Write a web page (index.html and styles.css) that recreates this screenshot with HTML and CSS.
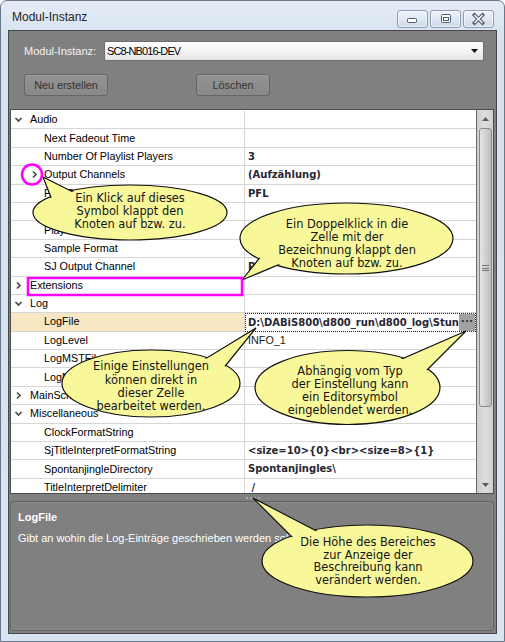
FILE: index.html
```html
<!DOCTYPE html>
<html lang="de">
<head>
    <meta charset="UTF-8">
    <meta name="viewport" content="width=device-width, initial-scale=1.0">
    <title>Modul-Instanz</title>
    <link rel="stylesheet" href="styles.css">
</head>
<body>
    <div class="window">
        <div class="titlebar">
            <span class="title">Modul-Instanz</span>
            <div class="caption">
                <span class="cap-btn">
                    <svg width="31" height="18"><rect x="10.5" y="8.5" width="9" height="4" rx="1" class="glyph"/></svg>
                </span>
                <span class="cap-btn">
                    <svg width="31" height="18"><rect x="11.5" y="4.5" width="9" height="8" rx="1" class="glyph"/><rect x="13.5" y="7.5" width="5" height="3" class="glyph-in"/></svg>
                </span>
                <span class="cap-btn">
                    <svg width="31" height="18"><path d="M11.5 5 L19.5 13 M19.5 5 L11.5 13" class="x-out"/><path d="M11.5 5 L19.5 13 M19.5 5 L11.5 13" class="x-in"/></svg>
                </span>
            </div>
        </div>

        <div class="client">
            <div class="instance-row">
                <label>Modul-Instanz:</label>
                <div class="combo">
                    <span>SC8-NB016-DEV</span>
                    <svg width="7" height="4"><polygon points="0,0 7,0 3.5,4" fill="#111"/></svg>
                </div>
            </div>

            <div class="button-row">
                <button class="btn btn-new">Neu erstellen</button>
                <button class="btn btn-delete">Löschen</button>
            </div>

            <div class="propgrid">
                <div class="rows">
                    <div class="row cat">
                        <div class="name"><svg class="chev" width="9" height="9"><polyline points="1.5,3 4.5,6 7.5,3"/></svg>Audio</div>
                        <div class="value"></div>
                    </div>
                    <div class="row">
                        <div class="name">Next Fadeout Time</div>
                        <div class="value"></div>
                    </div>
                    <div class="row">
                        <div class="name">Number Of Playlist Players</div>
                        <div class="value">3</div>
                    </div>
                    <div class="row">
                        <div class="name has-kids"><svg class="chev" width="9" height="9"><polyline points="3,1.5 6,4.5 3,7.5"/></svg>Output Channels</div>
                        <div class="value">(Aufzählung)</div>
                    </div>
                    <div class="row">
                        <div class="name">PFL Channel</div>
                        <div class="value">PFL</div>
                    </div>
                    <div class="row">
                        <div class="name">Playback Buffer</div>
                        <div class="value"></div>
                    </div>
                    <div class="row">
                        <div class="name">Player Output Channel</div>
                        <div class="value"></div>
                    </div>
                    <div class="row">
                        <div class="name">Sample Format</div>
                        <div class="value"></div>
                    </div>
                    <div class="row">
                        <div class="name">SJ Output Channel</div>
                        <div class="value">PFL</div>
                    </div>
                    <div class="row cat">
                        <div class="name"><svg class="chev" width="9" height="9"><polyline points="3,1.5 6,4.5 3,7.5"/></svg>Extensions</div>
                        <div class="value"></div>
                    </div>
                    <div class="row cat">
                        <div class="name"><svg class="chev" width="9" height="9"><polyline points="1.5,3 4.5,6 7.5,3"/></svg>Log</div>
                        <div class="value"></div>
                    </div>
                    <div class="row selected">
                        <div class="name">LogFile</div>
                        <div class="value editing">
                            <span class="edit-text">D:\DABiS800\d800_run\d800_log\Stundenlog.txt</span>
                            <span class="ellipsis">···</span>
                        </div>
                    </div>
                    <div class="row">
                        <div class="name">LogLevel</div>
                        <div class="value plain">INFO_1</div>
                    </div>
                    <div class="row">
                        <div class="name">LogMSTFile</div>
                        <div class="value"></div>
                    </div>
                    <div class="row">
                        <div class="name">LogMaxAge</div>
                        <div class="value"></div>
                    </div>
                    <div class="row cat">
                        <div class="name"><svg class="chev" width="9" height="9"><polyline points="3,1.5 6,4.5 3,7.5"/></svg>MainScheduler</div>
                        <div class="value"></div>
                    </div>
                    <div class="row cat">
                        <div class="name"><svg class="chev" width="9" height="9"><polyline points="1.5,3 4.5,6 7.5,3"/></svg>Miscellaneous</div>
                        <div class="value"></div>
                    </div>
                    <div class="row">
                        <div class="name">ClockFormatString</div>
                        <div class="value"></div>
                    </div>
                    <div class="row">
                        <div class="name">SjTitleInterpretFormatString</div>
                        <div class="value">&lt;size=10&gt;{0}&lt;br&gt;&lt;size=8&gt;{1}</div>
                    </div>
                    <div class="row">
                        <div class="name">SpontanjingleDirectory</div>
                        <div class="value">Spontanjingles\</div>
                    </div>
                    <div class="row">
                        <div class="name">TitleInterpretDelimiter</div>
                        <div class="value"> /</div>
                    </div>
                </div>
                <div class="vscroll">
                    <div class="arrow"><svg width="7" height="4"><polygon points="3.5,0 7,4 0,4"/></svg></div>
                    <div class="thumb"><span class="grip"></span></div>
                    <div class="track"></div>
                    <div class="arrow"><svg width="7" height="4"><polygon points="0,0 7,0 3.5,4"/></svg></div>
                </div>
            </div>

            <div class="splitter"><i></i><i></i><i></i><i></i></div>

            <div class="desc">
                <h4>LogFile</h4>
                <p>Gibt an wohin die Log-Einträge geschrieben werden sollen.</p>
            </div>
        </div>

        <!-- hints drawn over the dialog -->
        <svg class="notes" width="505" height="642">
            <g class="callout">
                <ellipse class="body" cx="130" cy="212.5" rx="97" ry="27.5"/>
                <path class="tail" d="M43 177 L52 200 L75 193 Z"/>
                <ellipse class="fill" cx="130" cy="212.5" rx="95.5" ry="26"/>
                <text x="130" y="201.5">Ein Klick auf dieses</text>
                <text x="130" y="214.5">Symbol klappt den</text>
                <text x="130" y="227.5">Knoten auf bzw. zu.</text>
            </g>
            <g class="callout">
                <ellipse class="body" cx="346.5" cy="238.5" rx="106.5" ry="35.5"/>
                <path class="tail" d="M242 280 L262 255 L285 262 Z"/>
                <ellipse class="fill" cx="346.5" cy="238.5" rx="105" ry="34"/>
                <text x="347" y="227.5">Ein Doppelklick in die</text>
                <text x="347" y="240.5">Zelle mit der</text>
                <text x="347" y="253.5">Bezeichnung klappt den</text>
                <text x="347" y="266.5">Knoten auf bzw. zu.</text>
            </g>
            <g class="callout">
                <ellipse class="body" cx="151" cy="383.5" rx="89" ry="33.5"/>
                <path class="tail" d="M256 328 L200 362 L222 370 Z"/>
                <ellipse class="fill" cx="151" cy="383.5" rx="87.5" ry="32"/>
                <text x="151" y="370">Einige Einstellungen</text>
                <text x="151" y="383.5">können direkt in</text>
                <text x="151" y="397">dieser Zelle</text>
                <text x="151" y="410">bearbeitet werden.</text>
            </g>
            <g class="callout">
                <ellipse class="body" cx="347.5" cy="387.5" rx="92.5" ry="37"/>
                <path class="tail" d="M466 331 L395 362 L425 372 Z"/>
                <ellipse class="fill" cx="347.5" cy="387.5" rx="91" ry="35.5"/>
                <text x="350" y="374.5">Abhängig vom Typ</text>
                <text x="350" y="387.5">der Einstellung kann</text>
                <text x="350" y="401">ein Editorsymbol</text>
                <text x="350" y="414">eingeblendet werden.</text>
            </g>
            <g class="callout">
                <ellipse class="body" cx="367.5" cy="561" rx="105.5" ry="36"/>
                <path class="tail" d="M253 498 L300 545 L330 538 Z"/>
                <ellipse class="fill" cx="367.5" cy="561" rx="104" ry="34.5"/>
                <text x="368" y="546">Die Höhe des Bereiches</text>
                <text x="368" y="558.5">zur Anzeige der</text>
                <text x="368" y="571">Beschreibung kann</text>
                <text x="368" y="584">verändert werden.</text>
            </g>
            <circle class="mark" cx="32" cy="174.5" r="10"/>
            <rect class="mark" x="28" y="278" width="214" height="17"/>
        </svg>
    </div>
</body>
</html>
```

FILE: styles.css
```css
* {
    box-sizing: border-box;
    margin: 0;
    padding: 0;
}
body {
    background: #fff;
    font-family: "Liberation Sans", Arial, sans-serif;
}

/* dialog frame */
.window {
    position: relative;
    width: 505px;
    height: 642px;
    border: 1px solid #6a7789;
    border-radius: 7px 7px 0 0;
    background: linear-gradient(#e4ecf6, #d6e2f0 40px, #d8e4f2);
    padding: 0 7px 7px;
    display: flex;
    flex-direction: column;
}
.titlebar {
    height: 29px;
    display: flex;
    justify-content: space-between;
    align-items: flex-start;
}
.title {
    font-size: 12px;
    line-height: 16px;
    margin: 8px 0 0 4px;
    color: #1e1e1e;
}
.caption {
    display: flex;
    gap: 2px;
    margin: 9px 3px 0 0;
}
.cap-btn {
    width: 31px;
    height: 18px;
    border: 1px solid #8d9cb0;
    border-radius: 3px;
    background: linear-gradient(#f3f6fb, #dde6f1 50%, #cfdbea);
    box-shadow: inset 0 0 0 1px rgba(255,255,255,.6);
}
.cap-btn svg {
    display: block;
    margin: -1px 0 0 -1px;
}
.glyph {
    fill: #fff;
    stroke: #4f5d6f;
}
.glyph-in {
    fill: none;
    stroke: #4f5d6f;
}
.x-out {
    stroke: #4f5d6f;
    stroke-width: 3.6;
    stroke-linecap: square;
}
.x-in {
    stroke: #fff;
    stroke-width: 1.4;
}

/* client area */
.client {
    flex: 1;
    background: #808080;
    border: 1px solid #474747;
    padding: 10px 0 2px;
    display: flex;
    flex-direction: column;
}
.instance-row {
    display: flex;
    align-items: center;
    height: 20px;
    padding: 0 12px 0 15px;
}
.instance-row label {
    width: 80px;
    font-size: 11px;
    color: #f3f3f3;
}
.combo {
    flex: 1;
    height: 20px;
    border: 1px solid #6e6e6e;
    border-radius: 2px;
    background: linear-gradient(#ffffff, #f4f4f4 50%, #e4e4e4);
    display: flex;
    align-items: center;
    justify-content: space-between;
    padding: 0 5px 0 2px;
    font-size: 11px;
    letter-spacing: -0.9px;
    color: #000;
}
.button-row {
    display: flex;
    gap: 88px;
    margin-top: 13px;
    padding-left: 15px;
}
.btn {
    height: 22px;
    font-family: "Liberation Sans", Arial, sans-serif;
    font-size: 10.8px;
    color: #333;
    background: linear-gradient(#929292, #888);
    border: 1px solid #666;
    border-radius: 3px;
    box-shadow: inset 0 1px 0 rgba(255,255,255,.15);
}
.btn-new {
    width: 84px;
}
.btn-delete {
    width: 74px;
}

/* property grid */
.propgrid {
    height: 385px;
    margin: 13px 2px 0 1px;
    border: 1px solid #4d4d4d;
    background: #fff;
    display: flex;
}
.rows {
    flex: 1;
    overflow: hidden;
    padding-top: 1px;
}
.row {
    display: grid;
    grid-template-columns: 234px 1fr;
    height: 18.4px;
    font-size: 10.8px;
    line-height: 17px;
}
.row .name,
.row .value {
    border-bottom: 1px solid #d6d6d6;
    white-space: nowrap;
    overflow: hidden;
}
.row .name {
    border-right: 1px solid #d6d6d6;
    padding-left: 33px;
    color: #000;
    display: flex;
    align-items: center;
}
.row .value {
    padding-left: 3px;
    font-family: "DejaVu Sans", sans-serif;
    font-weight: bold;
    font-size: 10px;
    color: #262634;
    white-space: pre;
}
.row .value.plain {
    font-family: "Liberation Sans", Arial, sans-serif;
    font-weight: normal;
    font-size: 10.8px;
    color: #1a1a1a;
}
.row.cat .name {
    padding-left: 3px;
}
.row .name.has-kids {
    padding-left: 19px;
}
.chev {
    flex: none;
    margin-right: 7px;
}
.has-kids .chev {
    margin-right: 5px;
}
.chev polyline {
    fill: none;
    stroke: #4a4a4a;
    stroke-width: 1.7;
}
.row.selected .name {
    background: #f7e8c3;
}
.value.editing {
    display: flex;
    justify-content: space-between;
    border: 1px dotted #222;
    padding-left: 2px;
}
.edit-text {
    overflow: hidden;
}
.ellipsis {
    flex: none;
    width: 16px;
    background: #a2a2a2;
    color: #3a3a3a;
    text-align: center;
    font-size: 11px;
    line-height: 15px;
}
.vscroll {
    width: 17px;
    border-left: 1px solid #6a6a6a;
    background: linear-gradient(90deg, #cdcdcd, #dedede 50%, #d0d0d0);
    display: flex;
    flex-direction: column;
}
.vscroll .arrow {
    height: 17px;
    display: flex;
    align-items: center;
    justify-content: center;
}
.vscroll .arrow polygon {
    fill: #5a5a5a;
}
.thumb {
    height: 279px;
    margin: 1px 1px 0 2px;
    border: 1px solid #8a8a8a;
    border-radius: 3px;
    background: linear-gradient(90deg, #e4e4e4, #cfcfcf 55%, #bdbdbd);
    display: flex;
    align-items: center;
    justify-content: center;
}
.grip {
    width: 7px;
    height: 6px;
    border-top: 1px solid #777;
    border-bottom: 1px solid #777;
    background: linear-gradient(#fff0 2px, #777 2px, #777 3px, #fff0 3px);
}
.track {
    flex: 1;
}

.splitter {
    height: 7px;
    display: flex;
    justify-content: center;
    align-items: center;
    gap: 2px;
}
.splitter i {
    width: 2px;
    height: 2px;
    background: #ababab;
}

.desc {
    height: 130px;
    margin: 0 2px 0 1px;
    border: 1px solid #606060;
    border-radius: 3px;
    box-shadow: inset 0 0 0 1px #8a8a8a;
    padding: 8px 7px;
    color: #fff;
    font-size: 11px;
    line-height: 14px;
}
.desc h4 {
    font-size: 11px;
}
.desc p {
    margin-top: 7px;
}

/* hint bubbles */
.notes {
    position: absolute;
    top: -1px;
    left: -1px;
    pointer-events: none;
}
.callout .body,
.callout .tail {
    fill: #f8f89b;
    stroke: #111;
    stroke-width: 1.2;
}
.callout .fill {
    fill: #f8f89b;
}
.callout text {
    font-family: "DejaVu Sans", sans-serif;
    font-size: 11.4px;
    fill: #141414;
    text-anchor: middle;
}
.mark {
    fill: none;
    stroke: #f0f;
    stroke-width: 2.5;
}
```
